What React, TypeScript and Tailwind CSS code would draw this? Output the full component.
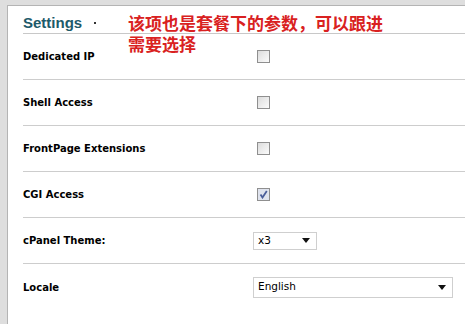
const rows: Array<{ label: string; kind: 'check' | 'theme' | 'locale'; checked?: boolean }> = [
  { label: 'Dedicated IP', kind: 'check' },
  { label: 'Shell Access', kind: 'check' },
  { label: 'FrontPage Extensions', kind: 'check' },
  { label: 'CGI Access', kind: 'check', checked: true },
  { label: 'cPanel Theme:', kind: 'theme' },
  { label: 'Locale', kind: 'locale' },
]

function Checkbox({ checked }: { checked?: boolean }) {
  return (
    <span
      className={`ml-[4px] flex h-[13px] w-[13px] items-center justify-center border border-[#8f8f8f] ${
        checked ? 'bg-[#dfe3ee]' : 'bg-gradient-to-br from-[#dcdcdc] to-[#fbfbfb]'
      }`}
    >
      {checked && (
        <svg width="9" height="9" viewBox="0 0 9 9">
          <path d="M1.5 4.5 L3.5 7.5 L7.8 1" fill="none" stroke="#4a5e9a" strokeWidth="1.8" />
        </svg>
      )}
    </span>
  )
}

function Select({ value, width, height }: { value: string; width: string; height: string }) {
  return (
    <div className={`flex items-center justify-between border border-[#cfcfcf] bg-white pl-[4px] pr-[6px] ${width} ${height}`}>
      <span className="text-[10.5px] text-black">{value}</span>
      <svg width="8" height="5" viewBox="0 0 8 5">
        <path d="M0 0 H8 L4 5 Z" fill="#111" />
      </svg>
    </div>
  )
}

export default function App() {
  return (
    <div className="h-[324px] w-[465px] overflow-hidden bg-[#dedede] pl-[7px] pt-[5px] font-['DejaVu_Sans',sans-serif]">
      <div className="relative h-full border-l border-t border-[#b4b4b4] bg-white pl-[15px]">
        {/* Header */}
        <div className="flex h-[28px] items-end border-b border-[#c8c8c8] pb-[3px]">
          <h2 className="text-[15px] font-bold leading-none text-[#1d5a6a] font-['Liberation_Sans',sans-serif]">Settings</h2>
          <span className="mb-[6px] ml-[12px] h-[2px] w-[2px] bg-[#333]" />
        </div>

        {/* Annotation */}
        <div className="absolute left-[120px] top-[6px] text-[17px] font-bold leading-[21px] text-[#d92121] font-['Noto_Sans_CJK_SC',sans-serif]">
          该项也是套餐下的参数，可以跟进
          <br />
          需要选择
        </div>

        {/* Rows */}
        {rows.map((row, i) => (
          <div
            key={row.label}
            className={`flex h-[46px] items-center ${i < rows.length - 1 ? 'border-b border-[#cdcdcd]' : ''}`}
          >
            <div className="w-[230px] text-[10px] font-bold text-black">{row.label}</div>
            {row.kind === 'check' && <Checkbox checked={row.checked} />}
            {row.kind === 'theme' && <Select value="x3" width="w-[64px]" height="h-[18px]" />}
            {row.kind === 'locale' && <Select value="English" width="w-[200px]" height="h-[21px]" />}
          </div>
        ))}
      </div>
    </div>
  )
}
